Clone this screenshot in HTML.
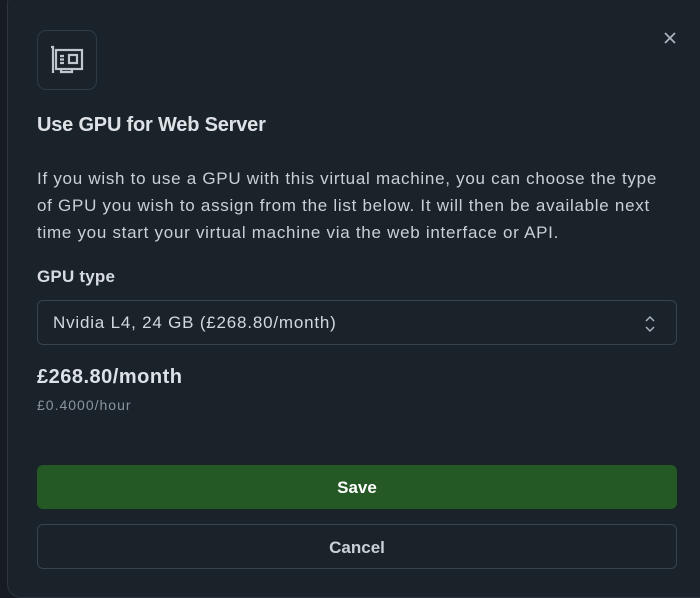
<!DOCTYPE html>
<html><head><meta charset="utf-8"><style>
*{box-sizing:border-box;margin:0;padding:0}
html,body{width:700px;height:598px;overflow:hidden;background:#161c21;font-family:"Liberation Sans",sans-serif}
.modal{position:absolute;left:7px;top:-10px;width:710px;height:608px;background:#1a232a;border:1px solid #2c353d;border-radius:14px}
.ib{position:absolute;left:37px;top:30px;width:60px;height:60px;border:1px solid #303a43;border-radius:9px}
.x{position:absolute;left:662px;top:30px}
h1{position:absolute;left:37px;top:114px;font-size:20px;font-weight:bold;color:#dde2e7;letter-spacing:-0.2px}
p{position:absolute;left:37px;top:165px;width:660px;font-size:17px;line-height:27px;color:#c9d0d6;letter-spacing:0.72px}
.lbl{position:absolute;left:37px;top:267px;font-size:17px;font-weight:bold;color:#d6dce1;letter-spacing:0.2px}
.sel{position:absolute;left:37px;top:300px;width:640px;height:45px;border:1px solid #39434c;border-radius:6px;color:#d3d9de;font-size:17px;padding:12px 0 0 15px;letter-spacing:0.8px}
.price{position:absolute;left:37px;top:366px;font-size:20px;font-weight:bold;color:#dde2e7;letter-spacing:0.5px}
.hr{position:absolute;left:37px;top:397px;font-size:14px;color:#8a949c;letter-spacing:1px}
.save{position:absolute;left:37px;top:465px;width:640px;height:44px;background:#245824;border-radius:6px;color:#fff;font-weight:bold;font-size:17px;text-align:center;line-height:46px}
.cancel{position:absolute;left:37px;top:524px;width:640px;height:45px;border:1px solid #39434c;border-radius:6px;color:#c9d0d6;font-weight:bold;font-size:17px;text-align:center;line-height:45px}
</style></head><body>
<div class="modal"></div>
<div class="ib"></div>
<svg style="position:absolute;left:0;top:0" width="120" height="100" fill="none" stroke="#c0c8cf" stroke-width="2.2">
<path d="M51 47H53V73"/><rect x="56" y="50" width="26" height="19"/><rect x="69" y="55" width="8" height="8"/>
<path d="M60 56H64M60 59.5H64M60 63H64"/><path d="M61 69V72H72V69"/>
</svg>
<svg class="x" width="16" height="16" stroke="#aab3bb" stroke-width="1.8"><path d="M3 3L13 13M13 3L3 13"/></svg>
<h1>Use GPU for Web Server</h1>
<p>If you wish to use a GPU with this virtual machine, you can choose the type<br>of GPU you wish to assign from the list below. It will then be available next<br>time you start your virtual machine via the web interface or API.</p>
<div class="lbl">GPU type</div>
<div class="sel">Nvidia L4, 24 GB (£268.80/month)
<svg style="position:absolute;left:606px;top:14px" width="12" height="18" fill="none" stroke="#aab3bb" stroke-width="1.5"><path d="M2 6L6 2L10 6M2 12L6 16L10 12"/></svg></div>
<div class="price">£268.80/month</div>
<div class="hr">£0.4000/hour</div>
<div class="save">Save</div>
<div class="cancel">Cancel</div>
</body></html>
